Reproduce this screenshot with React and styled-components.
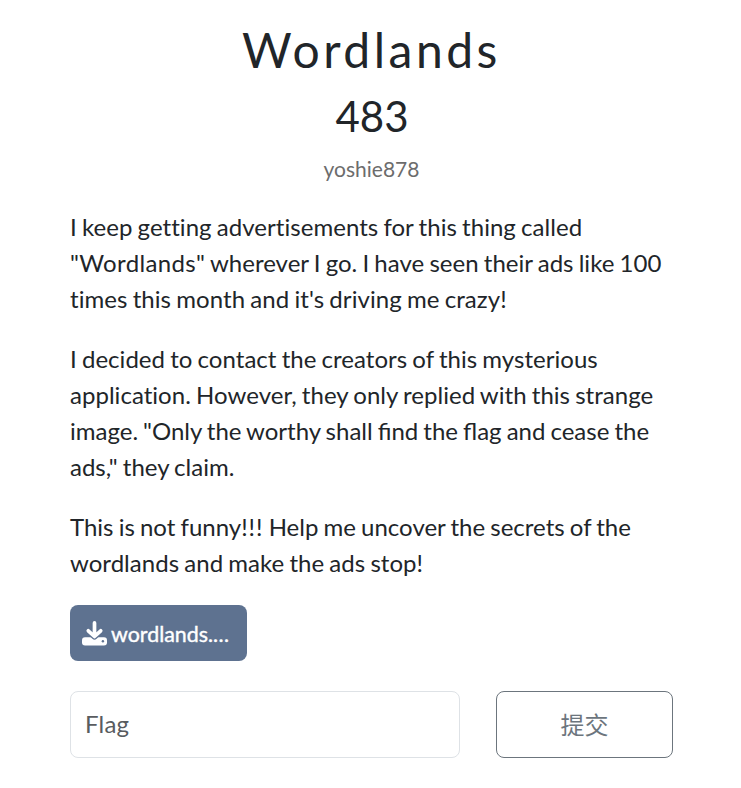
import React from "react";
import styled, { createGlobalStyle } from "styled-components";

const Global = createGlobalStyle`
  *, *::before, *::after { box-sizing: border-box; }
  body { margin: 0; background: #fff; color: #212529; font: 400 24px/36px Lato, "Noto Sans CJK SC", sans-serif; }
`;
const Page = styled.main`
  width: 741px; height: 788px; overflow: hidden; padding: 21px 68px 0 70px;
`;
const Header = styled.header`
  display: flex; flex-direction: column; align-items: center;
`;
const Title = styled.h1`
  margin: 0; font-size: 48px; line-height: 58px; font-weight: 400; letter-spacing: 3.5px;
`;
const Value = styled.h2`
  margin: 8px 0 0; font-size: 42px; line-height: 58px; font-weight: 400; padding-left: 1px;
`;
const Author = styled.div`
  margin-top: 8px; font-size: 21px; line-height: 32px; color: #6c6c6c;
`;
const Description = styled.section`
  margin-top: 24px;
`;
const Paragraph = styled.p`
  margin: 0 0 24px; white-space: nowrap;
`;
const Line = styled.span`
  display: block; word-spacing: ${({ $word = -1 }) => $word}px; letter-spacing: ${({ $track }) => ($track ? `${$track}px` : "normal")};
  font-variant-ligatures: ${({ $ligatures }) => ($ligatures ? "common-ligatures" : "no-common-ligatures")};
`;
const Tracked = styled.span`
  letter-spacing: ${({ $track }) => $track}px;
`;
const Download = styled.a`
  display: flex; align-items: center; gap: 4px; width: 177px; height: 56px; padding: 2px 12px 0;
  border-radius: 8px; background: #5e7290; color: #fff; font-size: 21.4px; font-weight: 400;
  -webkit-text-stroke: 0.4px #fff;
`;
const DownloadIcon = styled.svg`
  width: 25px; height: 25px; margin-top: -1px; flex: none; fill: none; stroke-linecap: round; stroke-linejoin: round;
`;
const Form = styled.form`
  display: flex; gap: 36px; margin-top: 30px;
`;
const Input = styled.input`
  width: 390px; height: 67px; padding: 0 14px 2px; border: 1px solid #dee2e6; border-radius: 8px;
  font: inherit; color: #212529;
  &::placeholder { color: #595c5f; opacity: 1; letter-spacing: 0.2px; }
`;
const Submit = styled.button`
  width: 177px; height: 67px; padding: 0; border: 1px solid #6c757d; border-radius: 8px;
  background: transparent; color: #6c757d; font: inherit;
`;

export default function App() {
  return (
    <Page>
      <Global />
      <Header>
        <Title>Wordlands</Title>
        <Value>483</Value>
        <Author>yoshie878</Author>
      </Header>
      <Description>
        <Paragraph>
          <Line $track={0.04}>I keep getting advertisements for this thing called</Line>
          <Line $track={0.02}><Tracked $track={0.35}>"Wordlands"</Tracked> wherever I go. I have seen their ads like 100</Line>
          <Line $track={0.06}>times this month and it's driving me crazy!</Line>
        </Paragraph>
        <Paragraph>
          <Line $track={0.03}>I decided to contact the creators of this mysterious</Line>
          <Line $track={0.03}>application. However, they only replied with this strange</Line>
          <Line $ligatures $word={-1.1}>image. "Only the worthy shall find the flag and cease the</Line>
          <Line>ads," they claim.</Line>
        </Paragraph>
        <Paragraph>
          <Line>This is not funny<Tracked $track={1}>!!!</Tracked> Help me uncover the secrets of the</Line>
          <Line $track={0.03}>wordlands and make the ads stop!</Line>
        </Paragraph>
      </Description>
      <Download>
        <DownloadIcon viewBox="0 0 25 25">
          <rect x="0" y="16.200" width="25" height="8.300" rx="3" fill="#fff" />
          <path d="M12.500 1.900V15M6.300 9.800L12.500 15.500L18.700 9.800" stroke="#5e7290" strokeWidth="6.200" />
          <path d="M12.500 1.900V15M6.300 9.800L12.500 15.500L18.700 9.800" stroke="#fff" strokeWidth="3.700" />
          <circle cx="20.900" cy="20.300" r="1.200" fill="#5e7290" />
        </DownloadIcon>
        <span>wordlands.…</span>
      </Download>
      <Form>
        <Input placeholder="Flag" />
        <Submit type="button">提交</Submit>
      </Form>
    </Page>
  );
}
